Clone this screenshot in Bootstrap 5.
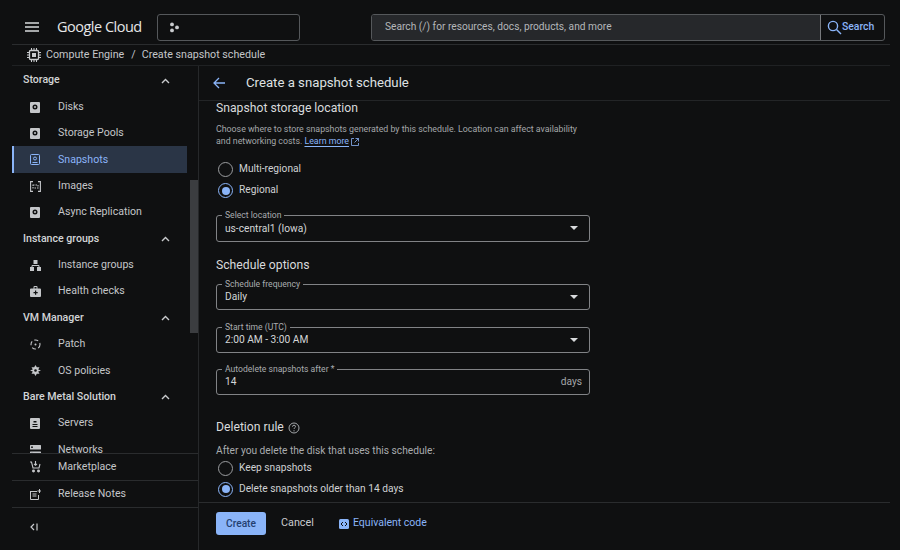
<!DOCTYPE html>
<html lang="en">
<head>
<meta charset="utf-8">
<title>Create a snapshot schedule</title>
<link href="https://cdn.jsdelivr.net/npm/bootstrap@5.3.0/dist/css/bootstrap.min.css" rel="stylesheet">
<style>
html,body{height:550px;overflow:hidden}
body{background:#0f1011;color:#d6d8da;font-family:Roboto,"Liberation Sans",sans-serif;font-size:10.6px;line-height:1.2;width:900px}
svg{display:block;flex:none}
.topbar{height:45px;padding-top:10px;margin:0 10px 0 12px;border-bottom:1px solid #2a2c2e}
.burger{width:45px;padding-left:13px}
.logo{font-family:"Open Sans",Roboto,sans-serif;font-size:14.5px;letter-spacing:-.5px;color:#e6e7e8;width:100px}
.picker{width:143px;height:27px;border:1px solid #55585b;border-radius:3px;padding-left:11px}
.searchbox{margin-left:71px;width:514px;height:27px;border:1px solid #55585b;border-radius:3px;overflow:hidden}
.searchfield{background:#26282b;padding-left:13px;color:#b4b7ba;font-size:10.2px}
.searchbtn{width:64px;border-left:1px solid #77797c;color:#8ab4f8;font-weight:500;font-size:10.4px;padding-left:6px;gap:0}
.crumbs{height:21px;margin:0 10px 0 12px;padding-left:15px;border-bottom:1px solid #1f2123;color:#c4c6c9;font-size:10.7px;gap:5px}
.slash{margin:0 1px 0 2px}
.shell{height:484px}
.side{width:187px;margin-left:12px;border-right:1px solid #26282a;flex:none;position:relative}
.sidescroll{height:388px;padding-top:1px;overflow:hidden;border-bottom:1px solid #2a2c2e}
.sec,.itm{height:26.4px;padding-top:1px;color:#c4c6c9;font-size:10.6px}
.sec{padding:1px 28px 0 11px;color:#d2d4d6;font-weight:500}
.itm{grid-template-columns:12px 1fr;column-gap:17px;align-items:center;padding-left:17px;width:175px}
.itm svg{justify-self:center}
.itm.on{background:#2a3546;color:#8ab4f8;border-left:2px solid #8ab4f8;padding-left:15px}
.thumb{position:absolute;right:0;top:114px;width:8px;height:153px;background:#3b3d40}
.sidefoot .itm{height:27px;width:auto;padding-top:0;border-bottom:1px solid #2a2c2e}
.collapsebox{height:38px;padding-left:18px}
.mainpane{width:691px;min-width:0}
.pagehead{height:35px;padding-left:14px;border-bottom:1px solid #232527;gap:21px;font-size:13.2px;color:#dfe1e3}
.formarea{height:401px;overflow:hidden;padding:0 0 0 17px}
.formh{font-size:12.2px;color:#d8dadc;font-weight:400;margin:0;line-height:15px}
.hint{font-size:8.8px;line-height:12px;color:#a4a7aa;width:372px;margin:7px 0 0}
.hint a{color:#8ab4f8;text-underline-offset:2px}
.optline{height:21px;gap:6px;color:#d0d2d4;font-size:10.2px;padding-left:2px}
.ring{width:15px;height:15px;border:1.3px solid #9a9c9f;border-radius:50%;position:relative;flex:none}
.ring.sel{border-color:#8ab4f8}
.ring.sel::after{content:"";position:absolute;inset:2.5px;background:#8ab4f8;border-radius:50%}
.fieldbox{width:374px;height:26.5px;border:1px solid #818386;border-radius:3px;padding:0 11px 0 8px;position:relative;color:#d4d6d8;font-size:10.2px}
.fieldcap{position:absolute;left:5px;top:-6px;background:#0f1011;color:#a9acaf;font-size:8.6px;line-height:10px;padding:0 3px}
.fieldval{padding-top:1px}
.caret{width:0;height:0;border-left:4px solid transparent;border-right:4px solid transparent;border-top:4px solid #d8dadc}
.unit{color:#a4a7aa;margin-right:-4px}
.radiogap{margin-top:12px}
.boxgap{margin-top:14px}
.h2gap{margin-top:16px}
.firstbox{margin-top:11px}
.nextbox{margin-top:16.5px}
.lastbox{margin-top:15.5px}
.delgap{margin-top:25px}
.delhint{margin-top:8.5px;color:#a9acaf;font-size:10.2px;line-height:13px}
.keepline{margin-top:1px}
.actions{height:47px;border-top:1px solid #2a2c2e;padding:0 0 5px 17px}
.cta{background:#8ab4f8;color:#24406f;border:0;border-radius:3px;width:50px;height:23px;font-size:10.2px;font-weight:500;padding:0}
.cta:hover{background:#8ab4f8;color:#24406f}
.cancelbtn{color:#c9cbce;font-size:10.8px;margin-left:15px;width:33px}
.codebtn{color:#8ab4f8;font-size:10.5px;margin-left:25px;gap:4px}
</style>
</head>
<body>
<header class="topbar d-flex align-items-center">
  <div class="burger"><svg width="14" height="10" viewBox="0 0 14 10"><path d="M0 1h14M0 5h14M0 9h14" stroke="#d8dadc" stroke-width="1.4"/></svg></div>
  <div class="logo">Google Cloud</div>
  <div class="picker d-flex align-items-center"><svg width="11" height="11" viewBox="0 0 11 11" fill="#c9cbce"><circle cx="3" cy="2.400" r="1.900"/><circle cx="3" cy="8.400" r="1.900"/><circle cx="8" cy="5.400" r="1.900"/></svg></div>
  <div class="searchbox d-flex">
    <div class="searchfield flex-grow-1 d-flex align-items-center">Search (/) for resources, docs, products, and more</div>
    <div class="searchbtn d-flex align-items-center"><svg width="15" height="15" viewBox="0 0 15 15" fill="none" stroke="#8ab4f8" stroke-width="1.400"><circle cx="6" cy="6" r="4.600"/><path d="M9.500 9.500l4.500 4.500"/></svg>Search</div>
  </div>
</header>
<div class="crumbs d-flex align-items-center">
  <svg width="14" height="14" viewBox="0 0 14 14" fill="none" stroke="#c9cbce" stroke-width="1.300"><rect x="2.500" y="2.500" width="9" height="9" rx="1"/><rect x="5" y="5" width="4" height="4" fill="#c9cbce" stroke="none"/><path d="M4.500 0v2M7 0v2M9.500 0v2M4.500 12v2M7 12v2M9.500 12v2M0 4.500h2M0 7h2M0 9.500h2M12 4.500h2M12 7h2M12 9.500h2" stroke-width="1"/></svg>
  <span>Compute Engine</span><span class="slash">/</span><span>Create snapshot schedule</span>
</div>
<div class="shell d-flex">
  <aside class="side d-flex flex-column">
    <div class="sidescroll">
      <div class="sec d-flex align-items-center justify-content-between">Storage<svg width="9" height="6" viewBox="0 0 9 6" fill="none" stroke="#c9cbce" stroke-width="1.400"><path d="M1 5l3.500-3.500L8 5"/></svg></div>
      <div class="itm d-grid"><svg width="10" height="11" viewBox="0 0 10 11"><path fill="#c4c6c9" fill-rule="evenodd" d="M1 0h8a1 1 0 011 1v9a1 1 0 01-1 1H1a1 1 0 01-1-1V1a1 1 0 011-1zm4 2.500a2.500 2.500 0 100 5 2.500 2.500 0 000-5z"/><circle cx="5" cy="5" r="1" fill="#c4c6c9"/></svg>Disks</div>
      <div class="itm d-grid"><svg width="10" height="11" viewBox="0 0 10 11"><path fill="#c4c6c9" fill-rule="evenodd" d="M1 0h8a1 1 0 011 1v9a1 1 0 01-1 1H1a1 1 0 01-1-1V1a1 1 0 011-1zm4 2.500a2.500 2.500 0 100 5 2.500 2.500 0 000-5z"/><circle cx="5" cy="5" r="1" fill="#c4c6c9"/></svg>Storage Pools</div>
      <div class="itm on d-grid"><svg width="10" height="11" viewBox="0 0 10 11" fill="none" stroke="#8ab4f8"><rect x=".5" y=".5" width="9" height="10" rx="1"/><circle cx="5" cy="4.500" r="1.500"/><path d="M2.500 8.500h5"/></svg>Snapshots</div>
      <div class="itm d-grid"><svg width="11" height="11" viewBox="0 0 11 11" fill="none" stroke="#c4c6c9" stroke-width="1.100"><path d="M3 .6H.6v9.800H3M8 .6h2.400v9.800H8"/><path d="M3 4h5v3H3z" stroke-dasharray="1.500 1"/></svg>Images</div>
      <div class="itm d-grid"><svg width="10" height="11" viewBox="0 0 10 11"><path fill="#c4c6c9" fill-rule="evenodd" d="M1 0h8a1 1 0 011 1v9a1 1 0 01-1 1H1a1 1 0 01-1-1V1a1 1 0 011-1zm4 2.500a2.500 2.500 0 100 5 2.500 2.500 0 000-5z"/><circle cx="5" cy="5" r="1" fill="#c4c6c9"/></svg>Async Replication</div>
      <div class="sec d-flex align-items-center justify-content-between">Instance groups<svg width="9" height="6" viewBox="0 0 9 6" fill="none" stroke="#c9cbce" stroke-width="1.400"><path d="M1 5l3.500-3.500L8 5"/></svg></div>
      <div class="itm d-grid"><svg width="11" height="11" viewBox="0 0 11 11" fill="#c4c6c9"><rect x="3.500" y="0" width="4" height="4"/><rect x="0" y="7" width="4" height="4"/><rect x="7" y="7" width="4" height="4"/><path d="M2 7V5.500h7V7" fill="none" stroke="#c4c6c9"/></svg>Instance groups</div>
      <div class="itm d-grid"><svg width="11" height="11" viewBox="0 0 11 11"><path fill="#c4c6c9" fill-rule="evenodd" d="M3.500 2.500V1a1 1 0 011-1h2a1 1 0 011 1v1.500H10a1 1 0 011 1V10a1 1 0 01-1 1H1a1 1 0 01-1-1V3.500a1 1 0 011-1zm1 0h2V1h-2zM5 4.500V6H3.500v1.200H5v1.500h1.200V7.200h1.500V6H6.200V4.500z"/></svg>Health checks</div>
      <div class="sec d-flex align-items-center justify-content-between">VM Manager<svg width="9" height="6" viewBox="0 0 9 6" fill="none" stroke="#c9cbce" stroke-width="1.400"><path d="M1 5l3.500-3.500L8 5"/></svg></div>
      <div class="itm d-grid"><svg width="11" height="11" viewBox="0 0 11 11" fill="none" stroke="#c4c6c9" stroke-width="1.100"><circle cx="5.500" cy="5.500" r="4.500" stroke-dasharray="4 2.500"/><circle cx="5.500" cy="5.500" r="1" fill="#c4c6c9" stroke="none"/></svg>Patch</div>
      <div class="itm d-grid"><svg width="11" height="11" viewBox="0 0 11 11" fill="#c4c6c9"><path d="M5.500 0l1.300 2.300h2.700L8.200 4.500 11 5.500 8.200 6.500l1.300 2.200H6.800L5.500 11 4.200 8.700H1.500l1.300-2.200L0 5.500l2.800-1-1.300-2.200h2.700z"/><circle cx="5.500" cy="5.500" r="1.300" fill="#0f1011"/></svg>OS policies</div>
      <div class="sec d-flex align-items-center justify-content-between">Bare Metal Solution<svg width="9" height="6" viewBox="0 0 9 6" fill="none" stroke="#c9cbce" stroke-width="1.400"><path d="M1 5l3.500-3.500L8 5"/></svg></div>
      <div class="itm d-grid"><svg width="10" height="11" viewBox="0 0 10 11"><path fill="#c4c6c9" fill-rule="evenodd" d="M1 0h8a1 1 0 011 1v9a1 1 0 01-1 1H1a1 1 0 01-1-1V1a1 1 0 011-1zm2.500 3v1.500h3V3zM2.500 6v1h5V6zm0 2v1h5V8z"/></svg>Servers</div>
      <div class="itm d-grid"><svg width="11" height="11" viewBox="0 0 11 11" fill="#c4c6c9"><rect width="11" height="4.500" rx=".5"/><rect y="6.500" width="11" height="4.500" rx=".5"/><circle cx="2" cy="2.200" r=".9" fill="#0f1011"/><circle cx="2" cy="8.700" r=".9" fill="#0f1011"/></svg>Networks</div>
    </div>
    <div class="sidefoot">
      <div class="itm d-grid"><svg width="11" height="12" viewBox="0 0 11 12" fill="none" stroke="#c4c6c9" stroke-width="1.100"><path d="M0 1h1.500l1.500 6h6l1-4"/><path d="M5.500 0v4M4 2.800l1.500 1.500L7 2.800"/><circle cx="3.500" cy="10" r=".9" fill="#c4c6c9"/><circle cx="8.500" cy="10" r=".9" fill="#c4c6c9"/></svg>Marketplace</div>
      <div class="itm d-grid"><svg width="11" height="11" viewBox="0 0 11 11"><path fill="#c4c6c9" d="M0 2h7v1H1v7h7V6h1v4a1 1 0 01-1 1H1a1 1 0 01-1-1zM2.500 4.500h4v1h-4zm0 2h4v1h-4zM9 0h1v1.500h1v1h-1V4H9V2.500H7.500v-1H9z"/></svg>Release Notes</div>
      <div class="collapsebox d-flex align-items-center"><svg width="8" height="8" viewBox="0 0 8 8" fill="none" stroke="#c9cbce" stroke-width="1.200"><path d="M4 1L1 4l3 3M7 .5v7"/></svg></div>
    </div>
    <div class="thumb"></div>
  </aside>
  <main class="mainpane d-flex flex-column">
    <div class="pagehead d-flex align-items-center">
      <svg width="12" height="12" viewBox="0 0 12 12" fill="none" stroke="#8ab4f8" stroke-width="1.300"><path d="M12 6H1M6 1L1 6l5 5"/></svg>
      <span>Create a snapshot schedule</span>
    </div>
    <div class="formarea">
      <h2 class="formh">Snapshot storage location</h2>
      <p class="hint">Choose where to store snapshots generated by this schedule. Location can affect availability and networking costs. <a href="#">Learn more</a> <svg class="d-inline" width="8" height="8" viewBox="0 0 8 8" fill="none" stroke="#8ab4f8" stroke-width=".8"><path d="M3 .5H.5v7h7V5M4.500.5h3v3M7.500.5L3.500 4.500"/></svg></p>
      <div class="optline d-flex align-items-center radiogap"><span class="ring"></span>Multi-regional</div>
      <div class="optline d-flex align-items-center"><span class="ring sel"></span>Regional</div>
      <div class="fieldbox d-flex align-items-center justify-content-between boxgap"><span class="fieldcap">Select location</span><span class="fieldval">us-central1 (Iowa)</span><span class="caret"></span></div>
      <h2 class="formh h2gap">Schedule options</h2>
      <div class="fieldbox d-flex align-items-center justify-content-between firstbox"><span class="fieldcap">Schedule frequency</span><span class="fieldval">Daily</span><span class="caret"></span></div>
      <div class="fieldbox d-flex align-items-center justify-content-between nextbox"><span class="fieldcap">Start time (UTC)</span><span class="fieldval">2:00 AM - 3:00 AM</span><span class="caret"></span></div>
      <div class="fieldbox d-flex align-items-center justify-content-between lastbox"><span class="fieldcap">Autodelete snapshots after *</span><span class="fieldval">14</span><span class="unit fieldval">days</span></div>
      <h2 class="formh d-flex align-items-center gap-1 delgap">Deletion rule <svg width="12" height="12" viewBox="0 0 12 12" fill="none" stroke="#a4a7aa"><circle cx="6" cy="6" r="5"/><path d="M4.500 4.700a1.500 1.500 0 113 0c0 1-1.500 1.100-1.500 2.300M6 8.200v1.200"/></svg></h2>
      <div class="text-nowrap delhint">After you delete the disk that uses this schedule:</div>
      <div class="optline d-flex align-items-center keepline"><span class="ring"></span>Keep snapshots</div>
      <div class="optline d-flex align-items-center"><span class="ring sel"></span>Delete snapshots older than 14 days</div>
    </div>
    <div class="actions d-flex align-items-center">
      <button type="button" class="btn cta">Create</button>
      <span class="cancelbtn">Cancel</span>
      <span class="codebtn d-flex align-items-center"><svg width="10" height="10" viewBox="0 0 10 10"><rect width="10" height="10" rx="1.500" fill="#8ab4f8"/><path d="M4 3L2 5l2 2M6 3l2 2-2 2" fill="none" stroke="#0f1011"/></svg>Equivalent code</span>
    </div>
  </main>
</div>
<script src="https://cdn.jsdelivr.net/npm/bootstrap@5.3.0/dist/js/bootstrap.bundle.min.js"></script>
</body>
</html>
